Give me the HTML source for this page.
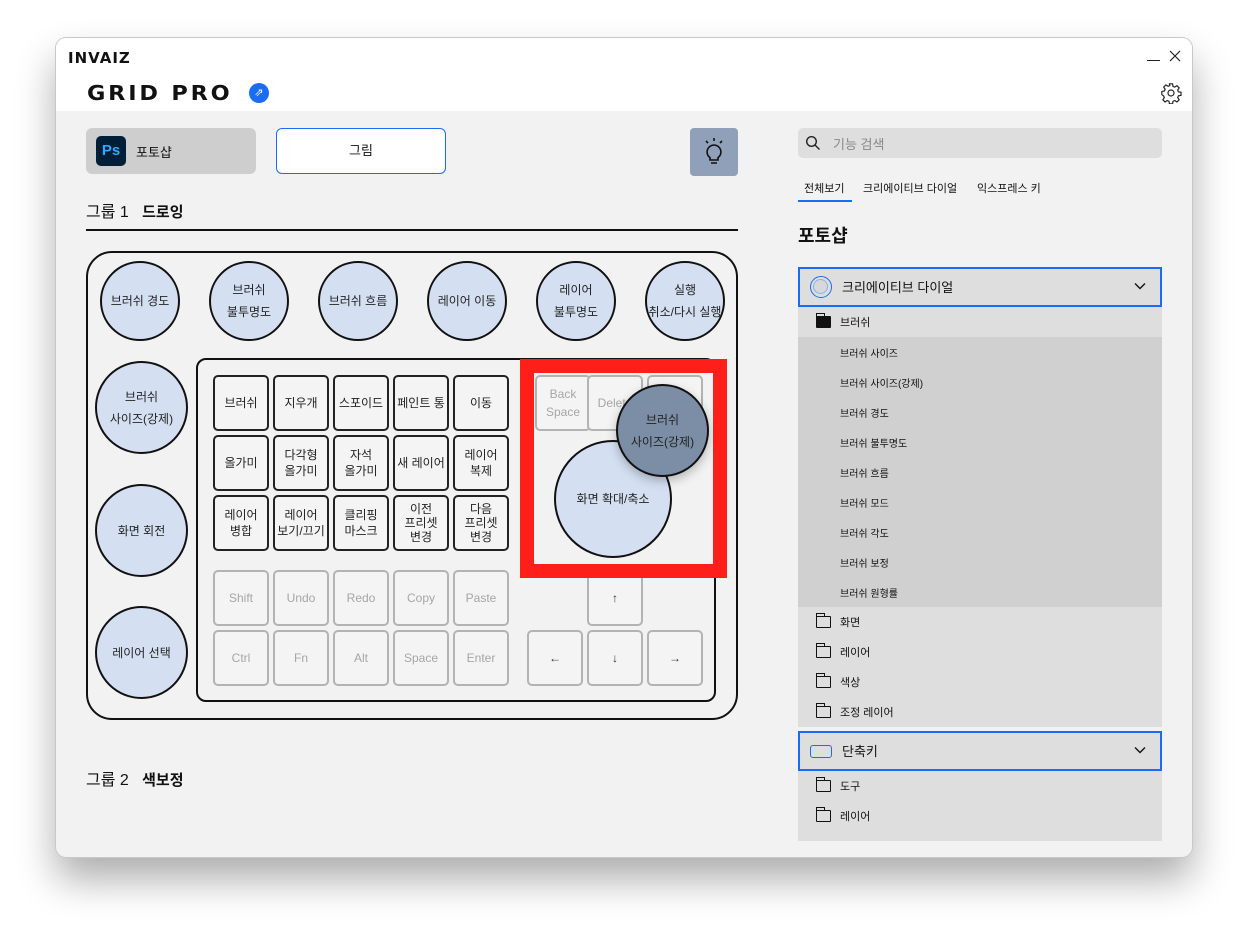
<!DOCTYPE html>
<html><head><meta charset="utf-8"><style>
*{box-sizing:border-box;margin:0;padding:0}
body{width:1248px;height:932px;background:#fff;position:relative;overflow:hidden;font-family:"Liberation Sans","Noto Sans CJK KR",sans-serif;color:#111}
.win{position:absolute;left:56px;top:38px;width:1136px;height:819px;background:#f2f2f2;border-radius:10px;box-shadow:0 0 0 1px #c8c8c8,0 22px 40px rgba(0,0,0,.33);overflow:hidden}
.hdr{position:absolute;left:0;top:0;width:100%;height:73px;background:#fff}
.a{position:absolute}
.c{position:absolute;border-radius:50%;background:#d4e0f2;border:2px solid #111;display:flex;align-items:center;justify-content:center;text-align:center;font-size:12px;line-height:22px;color:#222}
.k{position:absolute;width:56px;height:56px;border:2px solid #222;border-radius:5px;background:#f4f4f4;display:flex;align-items:center;justify-content:center;text-align:center;font-size:12px;line-height:16px;color:#222}
.g{border-color:#b3b3b3;color:#a6a6a6}
.row{position:absolute;left:742px;width:364px;height:30px;font-size:11px;display:flex;align-items:center;padding-left:42px}
.sub{font-size:10px;padding-left:42px}
.fold{position:absolute;left:18px;top:9px;width:15px;height:12px;border:1.5px solid #111;border-radius:1px}
.fold:before{content:"";position:absolute;left:-1.5px;top:-4px;width:7px;height:3px;border:1.5px solid #111;border-bottom:none}
.chev{position:absolute}
</style></head><body>
<div class="win">
<div class="hdr"></div>
<div class="a" style="left:12px;top:11px;font-weight:900;font-size:15px;letter-spacing:1px;font-family:'DejaVu Sans',sans-serif">INVAIZ</div>
<div class="a" style="left:31px;top:43px;font-weight:900;font-size:20px;letter-spacing:2.5px;font-family:'DejaVu Sans',sans-serif;transform:scaleX(1.12);transform-origin:left">GRID PRO</div>
<div class="a" style="left:193px;top:45px;width:20px;height:20px;border-radius:50%;background:#1a6cf5;color:#fff;font-size:11px;text-align:center;line-height:20px">⇗</div>
<div class="a" style="left:1091px;top:10px;width:13px;height:13px;border-bottom:1.2px solid #222"></div>
<svg class="a" style="left:1113px;top:12px" width="12" height="12" viewBox="0 0 12 12" stroke="#222" stroke-width="1.2"><path d="M1 1l10 10M11 1L1 11"/></svg>
<svg class="a" style="left:1104px;top:44px" width="22" height="22" viewBox="0 0 24 24" fill="none" stroke="#222" stroke-width="1.3"><circle cx="12" cy="12" r="3.3"/><path d="M10.3 2h3.4l.5 2.8 1.9.8 2.4-1.6 2.4 2.4-1.6 2.4.8 1.9 2.8.5v3.4l-2.8.5-.8 1.9 1.6 2.4-2.4 2.4-2.4-1.6-1.9.8-.5 2.8h-3.4l-.5-2.8-1.9-.8-2.4 1.6-2.4-2.4 1.6-2.4-.8-1.9L2 13.7v-3.4l2.8-.5.8-1.9L4 5.5 6.4 3.1l2.4 1.6 1.9-.8z"/></svg>

<div class="a" style="left:30px;top:90px;width:170px;height:46px;background:#cecece;border-radius:6px"></div>
<div class="a" style="left:40px;top:98px;width:30px;height:30px;background:#001e36;border-radius:5px;color:#31a8ff;font-weight:bold;font-size:15px;text-align:center;line-height:30px">Ps</div>
<div class="a" style="left:80px;top:104px;font-size:13px">포토샵</div>
<div class="a" style="left:220px;top:90px;width:170px;height:46px;background:#fff;border:1.5px solid #1a6cf5;border-radius:6px;font-size:13px;text-align:center;line-height:43px">그림</div>
<div class="a" style="left:634px;top:90px;width:48px;height:48px;background:#8fa0b8;border-radius:4px"></div>
<svg class="a" style="left:645px;top:98px" width="26" height="32" viewBox="0 0 26 32" fill="none" stroke="#111" stroke-width="1.6"><path d="M13 9a7 7 0 0 0-4 12.7V24h8v-2.3A7 7 0 0 0 13 9z"/><path d="M10 27h6M13 2v3M5 5l2 2M21 5l-2 2"/></svg>

<div class="a" style="left:30px;top:160px;font-size:16px">그룹 1 &nbsp;&nbsp;<b style="font-size:15px">드로잉</b></div>
<div class="a" style="left:30px;top:191px;width:652px;height:1.5px;background:#111"></div>

<div class="a" style="left:30px;top:213px;width:652px;height:469px;border:2px solid #111;border-radius:26px"></div>
<div class="a" style="left:140px;top:320px;width:520px;height:344px;border:2px solid #111;border-radius:10px"></div>

<div class="c" style="left:44px;top:223px;width:80px;height:80px">브러쉬 경도</div>
<div class="c" style="left:153px;top:223px;width:80px;height:80px">브러쉬<br>불투명도</div>
<div class="c" style="left:262px;top:223px;width:80px;height:80px">브러쉬 흐름</div>
<div class="c" style="left:371px;top:223px;width:80px;height:80px">레이어 이동</div>
<div class="c" style="left:480px;top:223px;width:80px;height:80px">레이어<br>불투명도</div>
<div class="c" style="left:589px;top:223px;width:80px;height:80px">실행<br>취소/다시 실행</div>
<div class="c" style="left:39px;top:323px;width:93px;height:93px">브러쉬<br>사이즈(강제)</div>
<div class="c" style="left:39px;top:446px;width:93px;height:93px">화면 회전</div>
<div class="c" style="left:39px;top:568px;width:93px;height:93px">레이어 선택</div>

<div class="k" style="left:157px;top:337px">브러쉬</div>
<div class="k" style="left:217px;top:337px">지우개</div>
<div class="k" style="left:277px;top:337px">스포이드</div>
<div class="k" style="left:337px;top:337px">페인트 통</div>
<div class="k" style="left:397px;top:337px">이동</div>
<div class="k" style="left:157px;top:397px">올가미</div>
<div class="k" style="left:217px;top:397px">다각형<br>올가미</div>
<div class="k" style="left:277px;top:397px">자석<br>올가미</div>
<div class="k" style="left:337px;top:397px">새 레이어</div>
<div class="k" style="left:397px;top:397px">레이어<br>복제</div>
<div class="k" style="left:157px;top:457px">레이어<br>병합</div>
<div class="k" style="left:217px;top:457px">레이어<br>보기/끄기</div>
<div class="k" style="left:277px;top:457px">클리핑<br>마스크</div>
<div class="k" style="left:337px;top:457px;line-height:14px">이전<br>프리셋<br>변경</div>
<div class="k" style="left:397px;top:457px;line-height:14px">다음<br>프리셋<br>변경</div>
<div class="k g" style="left:157px;top:532px">Shift</div>
<div class="k g" style="left:217px;top:532px">Undo</div>
<div class="k g" style="left:277px;top:532px">Redo</div>
<div class="k g" style="left:337px;top:532px">Copy</div>
<div class="k g" style="left:397px;top:532px">Paste</div>
<div class="k g" style="left:531px;top:532px;color:#333">↑</div>
<div class="k g" style="left:157px;top:592px">Ctrl</div>
<div class="k g" style="left:217px;top:592px">Fn</div>
<div class="k g" style="left:277px;top:592px">Alt</div>
<div class="k g" style="left:337px;top:592px">Space</div>
<div class="k g" style="left:397px;top:592px">Enter</div>
<div class="k g" style="left:471px;top:592px;color:#333">←</div>
<div class="k g" style="left:531px;top:592px;color:#333">↓</div>
<div class="k g" style="left:591px;top:592px;color:#333">→</div>
<div class="k g" style="left:479px;top:337px;line-height:18px">Back<br>Space</div>
<div class="k g" style="left:531px;top:337px">Delete</div>
<div class="k g" style="left:591px;top:337px"></div>

<div class="a" style="left:464px;top:321px;width:207px;height:219px;border:14px solid #ff1f1a"></div>
<div class="c" style="left:498px;top:402px;width:118px;height:118px;font-size:12px">화면 확대/축소</div>
<div class="c" style="left:560px;top:346px;width:93px;height:93px;background:#7b8ea6;box-shadow:0 4px 10px rgba(0,0,0,.25)">브러쉬<br>사이즈(강제)</div>

<div class="a" style="left:30px;top:728px;font-size:16px">그룹 2 &nbsp;&nbsp;<b style="font-size:15px">색보정</b></div>

<!-- right -->
<div class="a" style="left:742px;top:90px;width:364px;height:30px;background:#dedede;border-radius:5px"></div>
<svg class="a" style="left:749px;top:97px" width="16" height="16" viewBox="0 0 16 16" fill="none" stroke="#222" stroke-width="1.4"><circle cx="6.5" cy="6.5" r="4.8"/><path d="M10 10l4.5 4.5"/></svg>
<div class="a" style="left:777px;top:96px;font-size:13px;color:#888">기능 검색</div>
<div class="a" style="left:748px;top:142px;font-size:11px">전체보기</div>
<div class="a" style="left:742px;top:162px;width:54px;height:2px;background:#1a6cf5"></div>
<div class="a" style="left:807px;top:142px;font-size:11px">크리에이티브 다이얼</div>
<div class="a" style="left:921px;top:142px;font-size:11px">익스프레스 키</div>
<div class="a" style="left:742px;top:184px;font-size:18px;font-weight:bold">포토샵</div>

<div class="a" style="left:742px;top:229px;width:364px;height:40px;background:#dedede;border:2px solid #1a6cf5"></div>
<div class="a" style="left:754px;top:238px;width:22px;height:22px;border-radius:50%;border:1.5px solid #1a6cf5"><div style="margin:2px;width:15px;height:15px;border-radius:50%;border:1px solid #8ab0f0;background:#d8d8d8"></div></div>
<div class="a" style="left:786px;top:239px;font-size:13px">크리에이티브 다이얼</div>
<svg class="chev" style="left:1078px;top:244px" width="12" height="8" viewBox="0 0 12 8" fill="none" stroke="#111" stroke-width="1.4"><path d="M1 1.5l5 5 5-5"/></svg>
<div class="row" style="top:269px;background:#dedede"><div class="fold" style="background:#111"></div>브러쉬</div>
<div class="a" style="left:742px;top:299px;width:364px;height:270px;background:#d0d0d0"></div>
<div class="row sub" style="top:299px">브러쉬 사이즈</div>
<div class="row sub" style="top:329px">브러쉬 사이즈(강제)</div>
<div class="row sub" style="top:359px">브러쉬 경도</div>
<div class="row sub" style="top:389px">브러쉬 불투명도</div>
<div class="row sub" style="top:419px">브러쉬 흐름</div>
<div class="row sub" style="top:449px">브러쉬 모드</div>
<div class="row sub" style="top:479px">브러쉬 각도</div>
<div class="row sub" style="top:509px">브러쉬 보정</div>
<div class="row sub" style="top:539px">브러쉬 원형률</div>
<div class="row" style="top:569px;background:#dedede"><div class="fold"></div>화면</div>
<div class="row" style="top:599px;background:#dedede"><div class="fold"></div>레이어</div>
<div class="row" style="top:629px;background:#dedede"><div class="fold"></div>색상</div>
<div class="row" style="top:659px;background:#dedede"><div class="fold"></div>조정 레이어</div>

<div class="a" style="left:742px;top:693px;width:364px;height:40px;background:#dedede;border:2px solid #1a6cf5"></div>
<div class="a" style="left:754px;top:707px;width:22px;height:13px;border-radius:3px;border:1.3px solid #1a6cf5"></div>
<div class="a" style="left:786px;top:703px;font-size:13px">단축키</div>
<svg class="chev" style="left:1078px;top:708px" width="12" height="8" viewBox="0 0 12 8" fill="none" stroke="#111" stroke-width="1.4"><path d="M1 1.5l5 5 5-5"/></svg>
<div class="row" style="top:733px;background:#dedede"><div class="fold"></div>도구</div>
<div class="row" style="top:763px;background:#dedede"><div class="fold"></div>레이어</div>
<div class="row" style="top:793px;height:10px;background:#dedede;overflow:hidden"></div>
</div>
</body></html>
